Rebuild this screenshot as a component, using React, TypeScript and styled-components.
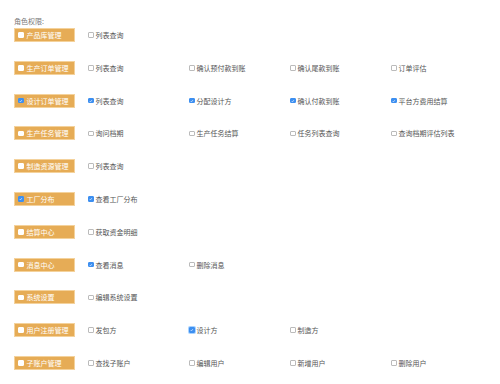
import React from "react";
import styled, { createGlobalStyle } from "styled-components";

type Perm = { label: string; checked?: boolean; focus?: boolean };
type Group = { title: string; checked?: boolean; perms: Perm[] };

const groups: Group[] = [
  { title: "产品库管理", perms: [{ label: "列表查询" }] },
  {
    title: "生产订单管理",
    perms: [
      { label: "列表查询" },
      { label: "确认预付款到账" },
      { label: "确认尾款到账" },
      { label: "订单评估" },
    ],
  },
  {
    title: "设计订单管理",
    checked: true,
    perms: [
      { label: "列表查询", checked: true },
      { label: "分配设计方", checked: true },
      { label: "确认付款到账", checked: true },
      { label: "平台方费用结算", checked: true },
    ],
  },
  {
    title: "生产任务管理",
    perms: [
      { label: "询问档期" },
      { label: "生产任务结算" },
      { label: "任务列表查询" },
      { label: "查询档期评估列表" },
    ],
  },
  { title: "制造资源管理", perms: [{ label: "列表查询" }] },
  {
    title: "工厂分布",
    checked: true,
    perms: [{ label: "查看工厂分布", checked: true }],
  },
  { title: "结算中心", perms: [{ label: "获取资金明细" }] },
  {
    title: "消息中心",
    perms: [{ label: "查看消息", checked: true }, { label: "删除消息" }],
  },
  { title: "系统设置", perms: [{ label: "编辑系统设置" }] },
  {
    title: "用户注册管理",
    perms: [
      { label: "发包方" },
      { label: "设计方", checked: true, focus: true },
      { label: "制造方" },
    ],
  },
  {
    title: "子账户管理",
    perms: [
      { label: "查找子账户" },
      { label: "编辑用户" },
      { label: "新增用户" },
      { label: "删除用户" },
    ],
  },
];

const Check = () => (
  <svg width="4" height="4" viewBox="0 0 8 8">
    <path d="M1.5 4.2 L3.3 6 L6.6 2" fill="none" stroke="#fff" strokeWidth="1.4" />
  </svg>
);

const App = () => {
  return (
    <>
      <GlobalStyle />
      <Page>
        <Label>角色权限:</Label>
        <List>
          {groups.map((group) => (
            <Row key={group.title}>
              <Tag>
                <Box checked={group.checked} light>
                  {group.checked && <Check />}
                </Box>
                {group.title}
              </Tag>
              {group.perms.map((perm) => (
                <Item key={perm.label}>
                  <Box checked={perm.checked} focus={perm.focus}>
                    {perm.checked && <Check />}
                  </Box>
                  {perm.label}
                </Item>
              ))}
            </Row>
          ))}
        </List>
      </Page>
    </>
  );
};

const GlobalStyle = createGlobalStyle`
  body {
    margin: 0;
    background: #fff;
    font-family: "Noto Sans CJK SC", "Noto Sans", sans-serif;
  }
`;

const Page = styled.div`
  padding: 17px 0 0 14px;
`;

const Label = styled.div`
  font-size: 7px;
  line-height: 9px;
  color: #777;
  margin-bottom: 2px;
`;

const List = styled.div`
  display: grid;
  row-gap: 18.8px;
`;

const Row = styled.div`
  display: flex;
  align-items: center;
  height: 14px;
`;

const Tag = styled.div`
  display: flex;
  align-items: center;
  gap: 3px;
  box-sizing: border-box;
  width: 61px;
  height: 14px;
  padding-left: 3px;
  margin-right: 13px;
  background: #e6ac56;
  border: 1px solid #f4d29c;
  color: #fff;
  font-size: 7px;
`;

const Item = styled.div`
  display: flex;
  align-items: center;
  gap: 2px;
  width: 101px;
  font-size: 7px;
  color: #555;
`;

const Box = styled.span<{ checked?: boolean; light?: boolean; focus?: boolean }>`
  display: flex;
  align-items: center;
  justify-content: center;
  box-sizing: border-box;
  width: 5.5px;
  height: 5.5px;
  border-radius: 1px;
  flex-shrink: 0;
  background: ${(p) => (p.checked ? "#3d8ff0" : "#fff")};
  border: 0.8px solid
    ${(p) => (p.checked ? "#3d8ff0" : p.light ? "#fff" : "#bbb")};
  box-shadow: ${(p) => (p.focus ? "0 0 0 1px rgba(64, 158, 255, 0.45)" : "none")};
`;

export default App;
